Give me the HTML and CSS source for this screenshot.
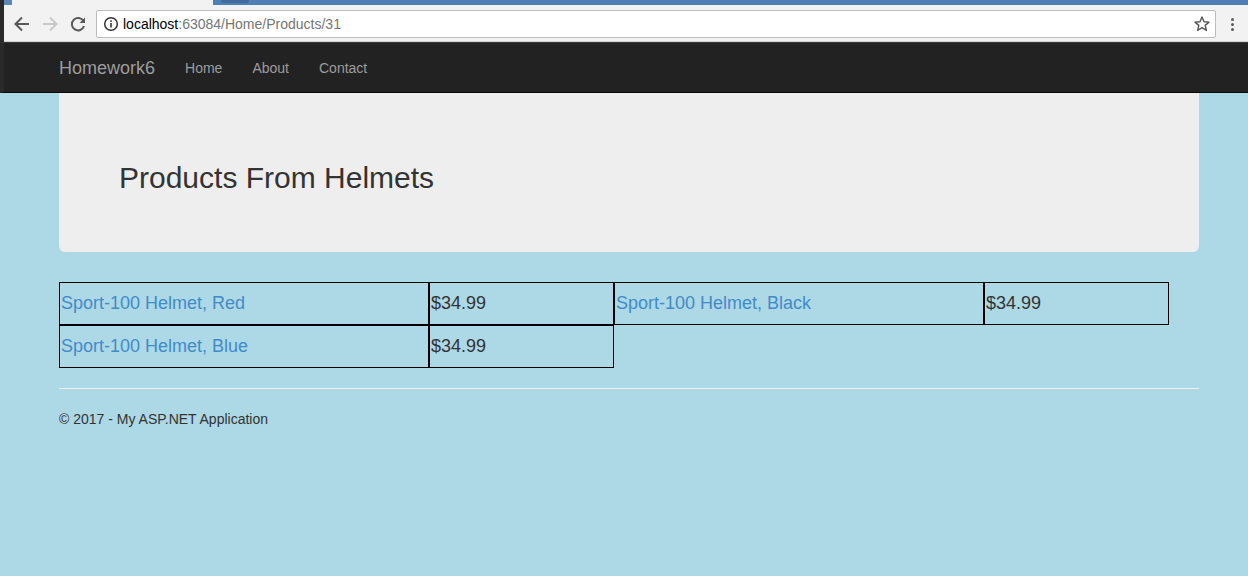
FILE: index.html
```html
<!DOCTYPE html>
<html>
<head>
<meta charset="utf-8">
<title>Products</title>
<link rel="stylesheet" href="styles.css">
</head>
<body>
<div class="browser">
  <div class="tabstrip">
    <div class="tab-corner"></div>
    <div class="tab-active"></div>
    <div class="tab-rest"><div class="tab-inner"></div></div>
  </div>
  <div class="toolbar">
    <div class="navbtns">
      <svg class="ico" width="20" height="20" viewBox="0 0 20 20"><path d="M17 10H4M10 3.5L3.5 10 10 16.5" fill="none" stroke="#5a5a5a" stroke-width="2"/></svg>
      <svg class="ico" width="20" height="20" viewBox="0 0 20 20"><path d="M3 10h13M10 3.5l6.5 6.5L10 16.5" fill="none" stroke="#c8c8c8" stroke-width="2"/></svg>
      <svg class="ico" width="20" height="20" viewBox="0 0 20 20"><path d="M15.5 7.2A6.2 6.2 0 1 0 16 12" fill="none" stroke="#5a5a5a" stroke-width="2"/><path d="M17 3.5V9h-5.5z" fill="#5a5a5a"/></svg>
    </div>
    <div class="omnibox">
      <svg class="info" width="16" height="16" viewBox="0 0 16 16"><circle cx="8" cy="8" r="6.3" fill="none" stroke="#333" stroke-width="1.5"/><rect x="7.2" y="7" width="1.6" height="4.5" fill="#333"/><rect x="7.2" y="4.3" width="1.6" height="1.6" fill="#333"/></svg>
      <span class="host">localhost</span><span class="path">:63084/Home/Products/31</span>
      <svg class="star" width="18" height="18" viewBox="0 0 18 18"><path d="M9 2l2 4.7 5 .4-3.8 3.3 1.2 4.9L9 12.7 4.6 15.3l1.2-4.9L2 7.1l5-.4z" fill="none" stroke="#555" stroke-width="1.4" stroke-linejoin="round"/></svg>
    </div>
    <div class="menu"><span></span><span></span><span></span></div>
  </div>
</div>
<nav class="navbar">
  <div class="container nav-inner">
    <a class="brand" href="#">Homework6</a>
    <a class="navlink" href="#">Home</a>
    <a class="navlink" href="#">About</a>
    <a class="navlink" href="#">Contact</a>
  </div>
</nav>
<main class="container">
  <div class="jumbotron">
    <h2>Products From Helmets</h2>
  </div>
  <div class="products">
    <div class="product"><a class="cell name" href="#">Sport-100 Helmet, Red</a><div class="cell price">$34.99</div></div>
    <div class="product"><a class="cell name" href="#">Sport-100 Helmet, Black</a><div class="cell price">$34.99</div></div>
    <div class="product"><a class="cell name" href="#">Sport-100 Helmet, Blue</a><div class="cell price">$34.99</div></div>
  </div>
  <hr class="rule">
  <footer class="footer">© 2017 - My ASP.NET Application</footer>
</main>
</body>
</html>
```
FILE: styles.css
```css
* { box-sizing: border-box; }
html, body { margin: 0; padding: 0; }
body {
  background: #add8e6;
  font-family: "Liberation Sans", Arial, sans-serif;
  color: #333;
  font-size: 14px;
  line-height: 20px;
  min-height: 576px;
}
.browser { background: #f2f2f2; border-left: 4px solid #2a2a2a; }
.tabstrip { display: flex; height: 5px; }
.tab-corner { width: 8px; background: #5b86b8; }
.tab-active { width: 201px; background: #f2f2f2; }
.tab-rest { flex: 1; background: #4f7fb4; }
.tab-inner { width: 28px; height: 3px; margin-left: 8px; background: #3f6c9f; border-radius: 0 0 3px 3px; }
.toolbar { display: flex; align-items: center; height: 37px; padding-top: 2px; border-bottom: 1px solid #cfcfcf; }
.navbtns { display: flex; gap: 8px; padding-left: 8px; width: 92px; }
.ico { display: block; }
.omnibox {
  flex: 0 0 1120px; height: 28px; background: #fff; border: 1px solid #bdbdbd; border-radius: 2px;
  display: flex; align-items: center; padding-left: 6px;
  font-family: "Liberation Sans", Arial, sans-serif; font-size: 14px;
}
.info { margin-right: 4px; }
.host { color: #000; }
.path { color: #767676; }
.star { margin-left: auto; margin-right: 4px; }
.menu { flex: 1; display: flex; flex-direction: column; align-items: center; gap: 2px; }
.menu span { width: 3px; height: 3px; border-radius: 50%; background: #5a5a5a; }
.navbar { background: #222; height: 51px; border-bottom: 1px solid #080808; border-top: 1px solid #3a3a3a; border-left: 4px solid #2a2a2a; }
.container { width: 1140px; margin-left: 59px; }
.nav-inner { display: flex; align-items: center; height: 49px; margin-left: 55px; }
.brand { color: #9d9d9d; font-size: 18px; text-decoration: none; padding-right: 15px; line-height: 20px; }
.navlink { color: #9d9d9d; font-size: 14px; text-decoration: none; padding: 0 15px; }
.jumbotron { background: #eee; padding: 48px 60px; border-radius: 0 0 6px 6px; margin-bottom: 30px; }
.jumbotron h2 { margin: 20px 0 10px; font-size: 30px; font-weight: 500; line-height: 33px; color: #333; }
.products { display: flex; flex-wrap: wrap; width: 1140px; }
.product { display: flex; }
.cell { display: block; height: 43px; border: 1px solid #000; line-height: 41px; font-size: 18px; padding: 0 1px; }
.name { width: 370px; color: #428bca; text-decoration: none; }
.price { width: 185px; color: #333; padding-left: 1px; }
.rule { margin: 20px 0; border: 0; border-top: 1px solid #eee; }
.footer { font-size: 14px; line-height: 20px; color: #333; }
```
